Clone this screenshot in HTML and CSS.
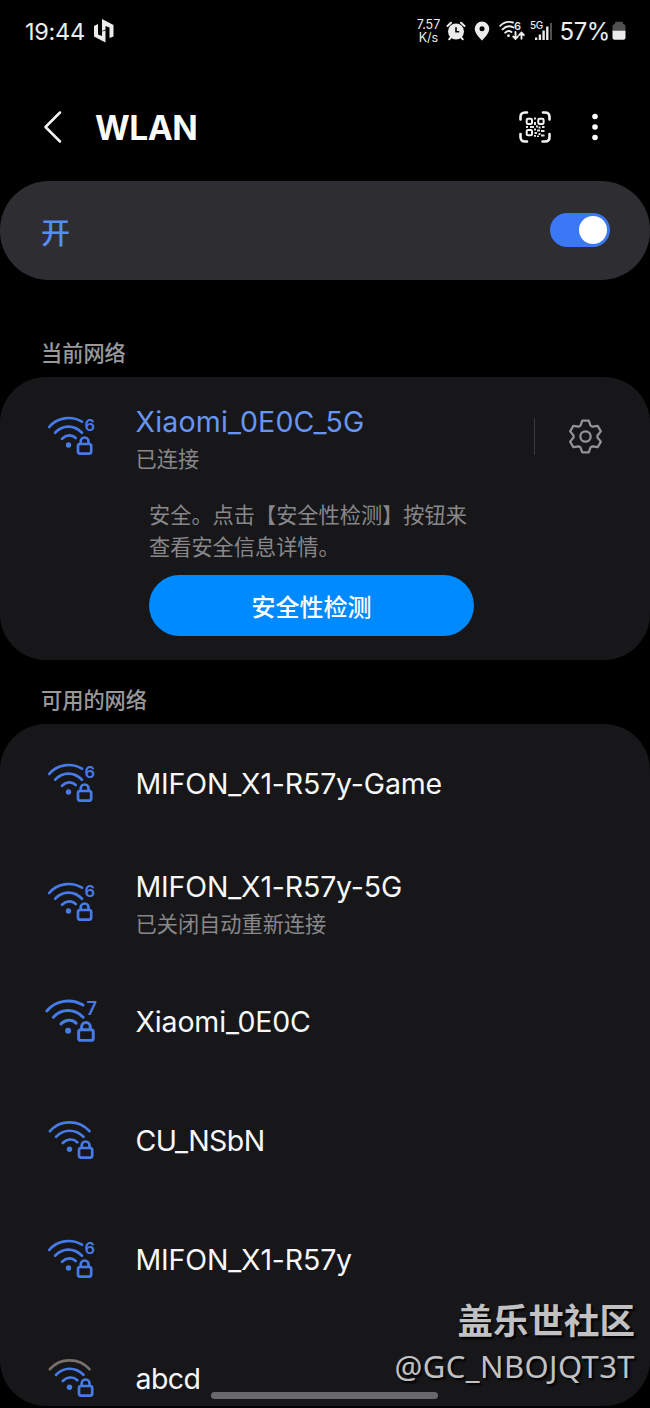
FILE: index.html
```html
<!DOCTYPE html>
<html lang="zh-CN">
<head>
<meta charset="utf-8">
<title>WLAN</title>
<link rel="stylesheet" href="styles.css">
</head>
<body>
<svg class="defs" aria-hidden="true">
  <symbol id="lock" viewBox="0 0 56 56">
    <rect x="34" y="35" width="13.200" height="9.600" rx="2"/>
    <path d="M36.700 34.600v-2.200a3.900 3.900 0 0 1 7.800 0v2.200"/>
  </symbol>
  <symbol id="wifi-gen" viewBox="0 0 56 56">
    <path d="M5.200 18C13 8.600 27 6.200 38 12.700"/>
    <path d="M11.200 23.700C18.500 15.600 30 15.600 38 23.700"/>
    <path d="M18 29.700C22.500 25.400 28 25.400 31.700 29"/>
    <circle class="dot" cx="24.500" cy="36" r="2.700"/>
    <use href="#lock"/>
  </symbol>
  <symbol id="wifi-plain" viewBox="0 0 56 56">
    <path d="M5.900 18.200C16 6.300 35 6.300 45.500 18.200" class="outer"/>
    <path d="M12 23.800C19.500 15.700 31.500 15.700 39.500 23.800"/>
    <path d="M18.800 30C23.500 25.500 29.500 25.500 33.300 29.200"/>
    <circle class="dot" cx="25.500" cy="36.200" r="2.700"/>
    <use href="#lock" x="1"/>
  </symbol>
</svg>
<main class="phone">
  <header class="status">
    <div class="status-left">
      <span class="clock">19:44</span>
      <svg class="logo" viewBox="0 0 20 24"><path d="M0 7L4 5v10.500L8 17v-4.500l3.500-1v12L0 17.500zM8 0l11.500 6v11.500l-4 1.500V8.500l-4-1.500v3.500L8 12z"/></svg>
    </div>
    <div class="status-right">
      <div class="speed"><span>7.57</span><span>K/s</span></div>
      <svg class="alarm" viewBox="0 0 20 20"><path class="thin" d="M1.500 5L5 1.700M18.500 5L15 1.700M5.500 15.500l-2.300 2.800M14.500 15.500l2.300 2.800"/><circle cx="10" cy="10.500" r="8"/><path class="hand" d="M10 6.300v4.500h3.200"/></svg>
      <svg class="pin" viewBox="0 0 16 20"><path fill-rule="evenodd" d="M8 .5a7.300 7.300 0 0 0-7.300 7.300C.7 13 8 19.500 8 19.500S15.300 13 15.300 7.800A7.300 7.300 0 0 0 8 .5zm0 4.800a2.500 2.500 0 1 1 0 5 2.500 2.500 0 0 1 0-5z"/></svg>
      <svg class="swifi" viewBox="0 0 26 22"><path d="M1.200 5.800C5 1.800 9.500 1.200 14 2.500M3.500 9.300C7 5.800 11 5.500 14.500 7.500M6.200 12.700C8.500 10.600 10.500 10.600 12.500 12"/><circle cx="9.500" cy="15.700" r="1.400"/><path d="M16.500 12v6.500M14.200 16.500l2.300 2.300 2.300-2.300M22.500 18.800v-6M20.200 15l2.300-2.300 2.300 2.300"/><text x="15" y="10">6</text></svg>
      <svg class="signal" viewBox="0 0 23 22"><text x="0" y="8.500">5G</text><path d="M5 17.500h2.300V20H5zM8.700 14.500h2.400V20H8.700zM12.400 10.500h2.400V20h-2.400zM16.100 6.500h2.400V20h-2.400z"/><path class="dim" d="M20 3h2v17h-2z"/></svg>
      <span class="percent">57%</span>
      <svg class="battery" viewBox="0 0 14 20"><path class="dim" d="M3 3V1.800Q3 .8 4 .8h6q1 0 1 1V3q2.500 0 2.500 2.500V10H.5V5.500Q.5 3 3 3z"/><path d="M.5 9.700h13v7q0 2-2 2h-9q-2 0-2-2z"/></svg>
    </div>
  </header>

  <nav class="appbar">
    <svg class="back" viewBox="0 0 20 34"><path d="M17 2.500L2.500 17 17 31.500"/></svg>
    <h1>WLAN</h1>
    <svg class="qr" viewBox="0 0 32 32">
      <path class="frame" d="M1.500 8.500V6q0-4.500 4.500-4.500h2M24 1.500h2q4.500 0 4.500 4.500v2.500M30.500 23v3q0 4.500-4.500 4.500h-2.500M8 30.500H6Q1.500 30.500 1.500 26v-3"/>
      <rect x="7.700" y="7.700" width="5.300" height="5.300" rx="1.300"/><rect x="19.300" y="7.700" width="5.300" height="5.300" rx="1.300"/><rect x="7.700" y="19" width="5.300" height="5.300" rx="1.300"/>
      <path class="bits" d="M15 6.500h2v2h-2zM15 11h2v3h-2zM7 15h2v2H7zM11 15h4v2h-4zM17 14.500h2v2h-2zM19.500 15.500h2v2h-2zM23 15h2.500v2H23zM15 17.500h2v2h-2zM18 18.500h3v2h-3zM22 19h3.500v2H22zM15.500 21h2.500v2h-2.500zM19.500 22h2v2h-2zM22 23.500h3.500v2H22zM15 24h2v1.800h-2zM18 24.500h2v1.500h-2z"/>
    </svg>
    <svg class="more" viewBox="0 0 8 28"><circle cx="4" cy="3.500" r="2.800"/><circle cx="4" cy="14" r="2.800"/><circle cx="4" cy="24.500" r="2.800"/></svg>
  </nav>

  <section class="switch-bar"><span>开</span><div class="toggle"><i></i></div></section>

  <h2 class="label current-label">当前网络</h2>
  <section class="card current">
    <div class="connected">
      <svg class="wifi" viewBox="0 0 56 56"><use href="#wifi-gen"/><text x="40.500" y="21.600">6</text></svg>
      <div class="names"><span class="ssid">Xiaomi_0E0C_5G</span><span class="note">已连接</span></div>
      <i class="divider"></i>
      <svg class="gear" viewBox="-18 -18 36 36"><path d="M-5.200-11.200L-3.300-16.300H3.300L5.200-11.200 7.100-10.100 12.500-11 15.800-5.300 12.300-1.100V1.100L15.800 5.300 12.500 11 7.100 10.100 5.200 11.200 3.300 16.300H-3.300L-5.200 11.200-7.100 10.100-12.500 11-15.800 5.300-12.300 1.100V-1.100L-15.800-5.300-12.500-11-7.100-10.100z"/><circle r="5.300"/></svg>
    </div>
    <p class="safe">安全。点击【安全性检测】按钮来<br>查看安全信息详情。</p>
    <button class="check">安全性检测</button>
  </section>

  <h2 class="label available-label">可用的网络</h2>
  <section class="card list">
    <div class="row"><svg class="wifi" viewBox="0 0 56 56"><use href="#wifi-gen"/><text x="40.500" y="21.600">6</text></svg><div class="names"><span class="ssid">MIFON_X1-R57y-Game</span></div></div>
    <div class="row two-line"><svg class="wifi" viewBox="0 0 56 56"><use href="#wifi-gen"/><text x="40.500" y="21.600">6</text></svg><div class="names"><span class="ssid">MIFON_X1-R57y-5G</span><span class="note">已关闭自动重新连接</span></div></div>
    <div class="row"><svg class="wifi seven" viewBox="0 0 56 56"><use href="#wifi-gen"/><text x="41" y="21.300">7</text></svg><div class="names"><span class="ssid">Xiaomi_0E0C</span></div></div>
    <div class="row"><svg class="wifi" viewBox="0 0 56 56"><use href="#wifi-plain"/></svg><div class="names"><span class="ssid narrow">CU_NSbN</span></div></div>
    <div class="row"><svg class="wifi" viewBox="0 0 56 56"><use href="#wifi-gen"/><text x="40.500" y="21.600">6</text></svg><div class="names"><span class="ssid">MIFON_X1-R57y</span></div></div>
    <div class="row"><svg class="wifi weak" viewBox="0 0 56 56"><use href="#wifi-plain"/></svg><div class="names"><span class="ssid narrow">abcd</span></div></div>
  </section>

  <i class="home-bar"></i>
  <div class="watermark"><strong>盖乐世社区</strong><span>@GC_NBOJQT3T</span></div>
</main>
</body>
</html>
```
FILE: styles.css
```css
* { box-sizing: border-box; }
body { margin: 0; background: #000; }
svg { display: block; flex: none; }
.defs { position: absolute; width: 0; height: 0; }
.phone {
  position: relative;
  width: 650px;
  height: 1408px;
  overflow: hidden;
  background: #000;
  color: #f8f8fa;
  font-family: Inter, "Noto Sans CJK SC", sans-serif;
}

.status { height: 62px; padding: 0 24px 0 25px; display: flex; align-items: center; justify-content: space-between; color: #ececec; fill: #ececec; }
.status-left, .status-right { display: flex; align-items: center; }
.clock { font-size: 23.5px; letter-spacing: -.3px; }
.logo { width: 20px; height: 24px; margin-left: 9px; }
.speed { width: 24px; display: flex; flex-direction: column; align-items: center; font-size: 12.5px; line-height: 13px; }
.alarm { width: 20px; height: 20px; margin-left: 6px; }
.alarm .thin { stroke: #ececec; stroke-width: 2; stroke-linecap: round; }
.alarm .hand { fill: none; stroke: #000; stroke-width: 1.6; }
.pin { width: 16px; height: 20px; margin-left: 8px; }
.swifi { width: 26px; height: 22px; margin-left: 9px; overflow: visible; }
.swifi path { fill: none; stroke: #ececec; stroke-width: 1.9; stroke-linecap: round; }
.swifi text { font-size: 11px; font-weight: 600; }
.signal { width: 23px; height: 22px; margin-left: 5px; overflow: visible; }
.signal text { font-size: 10px; font-weight: 500; letter-spacing: -.5px; }
.dim { fill: #505050; }
.percent { margin-left: 6px; font-size: 24px; letter-spacing: -.4px; }
.battery { width: 14px; height: 20px; margin-left: 2px; }

.appbar { height: 120px; margin: 5px 0 -6px; padding: 0 51px 0 43px; display: flex; align-items: center; }
.back { width: 20px; height: 34px; fill: none; stroke: #f4f4f4; stroke-width: 2.5; stroke-linecap: round; stroke-linejoin: round; }
h1 { margin: 2px auto 0 32px; font-size: 33.5px; line-height: 40px; font-weight: 700; letter-spacing: -.5px; color: #fafafa; }
.qr { width: 32px; height: 32px; fill: none; stroke: #f4f4f4; stroke-width: 2; }
.qr .frame { stroke-width: 2.6; stroke-linecap: round; }
.qr .bits { fill: #e4e4e4; stroke: none; }
.more { width: 8px; height: 28px; margin-left: 40px; fill: #fff; }

.switch-bar { height: 99px; padding: 0 40px 0 41px; border-radius: 49px; background: #2e2e32; display: flex; align-items: center; justify-content: space-between; color: #588cf5; font-size: 29px; font-weight: 500; }
.toggle { width: 60px; height: 34px; margin-bottom: 1px; padding: 3px; border-radius: 17px; background: #3b78f6; display: flex; justify-content: flex-end; }
.toggle i { width: 28px; height: 28px; border-radius: 50%; background: #fff; }

.label { margin: 0; padding-left: 41px; font-size: 21.2px; line-height: 30px; font-weight: 500; color: #98989b; }
.current-label { margin-top: 58px; }
.card { background: #17171a; border-radius: 46px; overflow: hidden; }
.current { height: 283px; margin-top: 9px; }
.available-label { margin-top: 25px; }
.list { height: 682px; margin-top: 9px; }
.connected { height: 119px; display: flex; align-items: center; padding: 0 46px 0 44px; }
.row { height: 119px; display: flex; align-items: center; padding: 0 44px; }
.wifi { width: 56px; height: 56px; overflow: visible; fill: none; stroke: #477bea; stroke-width: 2.7; stroke-linecap: round; stroke-linejoin: round; }
.wifi text { fill: #477bea; stroke: none; font-size: 16.5px; font-weight: 600; }
.dot { fill: #477bea; stroke: none; }
.weak { --outer: #77716e; }
.outer { stroke: var(--outer, #477bea); }
.seven { width: 62px; height: 62px; margin: 0 -3px; }
.names { margin-left: 35.5px; display: flex; flex-direction: column; align-items: flex-start; }
.ssid { font-size: 28.5px; line-height: 38px; letter-spacing: -.15px; white-space: nowrap; }
.narrow { letter-spacing: -.6px; }
.note { margin-bottom: -3px; font-size: 21.2px; line-height: 36px; color: #88888b; }
.connected .names { padding-top: 4px; }
.two-line .names { padding-top: 2px; }
.connected .ssid { color: #6795f3; letter-spacing: .2px; }
.divider { width: 1px; height: 37px; margin-left: auto; background: #3a3a3e; }
.gear { width: 35px; height: 35px; margin: 0 1px 1px 33px; fill: none; stroke: #949496; stroke-width: 2.3; stroke-linejoin: round; }
.safe { margin: 3px 0 0 149px; font-size: 21.2px; line-height: 32px; color: #88888b; white-space: nowrap; }
.check { display: block; width: 325px; height: 61px; margin: 12px 0 0 149px; padding: 0; border: 0; border-radius: 31px; background: #008aff; color: #fff; font: 500 24px "Noto Sans CJK SC", sans-serif; }

.home-bar { position: absolute; left: 211px; top: 1392px; width: 227px; height: 7px; border-radius: 4px; background: #69696c; }
.watermark { position: absolute; right: 15px; top: 1296px; display: flex; flex-direction: column; align-items: flex-end; color: #c1c1c3; text-shadow: 2px 2px 2px #000; font-family: "Noto Sans", "Noto Sans CJK SC", sans-serif; white-space: nowrap; }
.watermark strong { font-size: 35.5px; line-height: 48px; font-weight: 700; }
.watermark span { font-size: 31px; line-height: 44px; letter-spacing: .4px; }
```
